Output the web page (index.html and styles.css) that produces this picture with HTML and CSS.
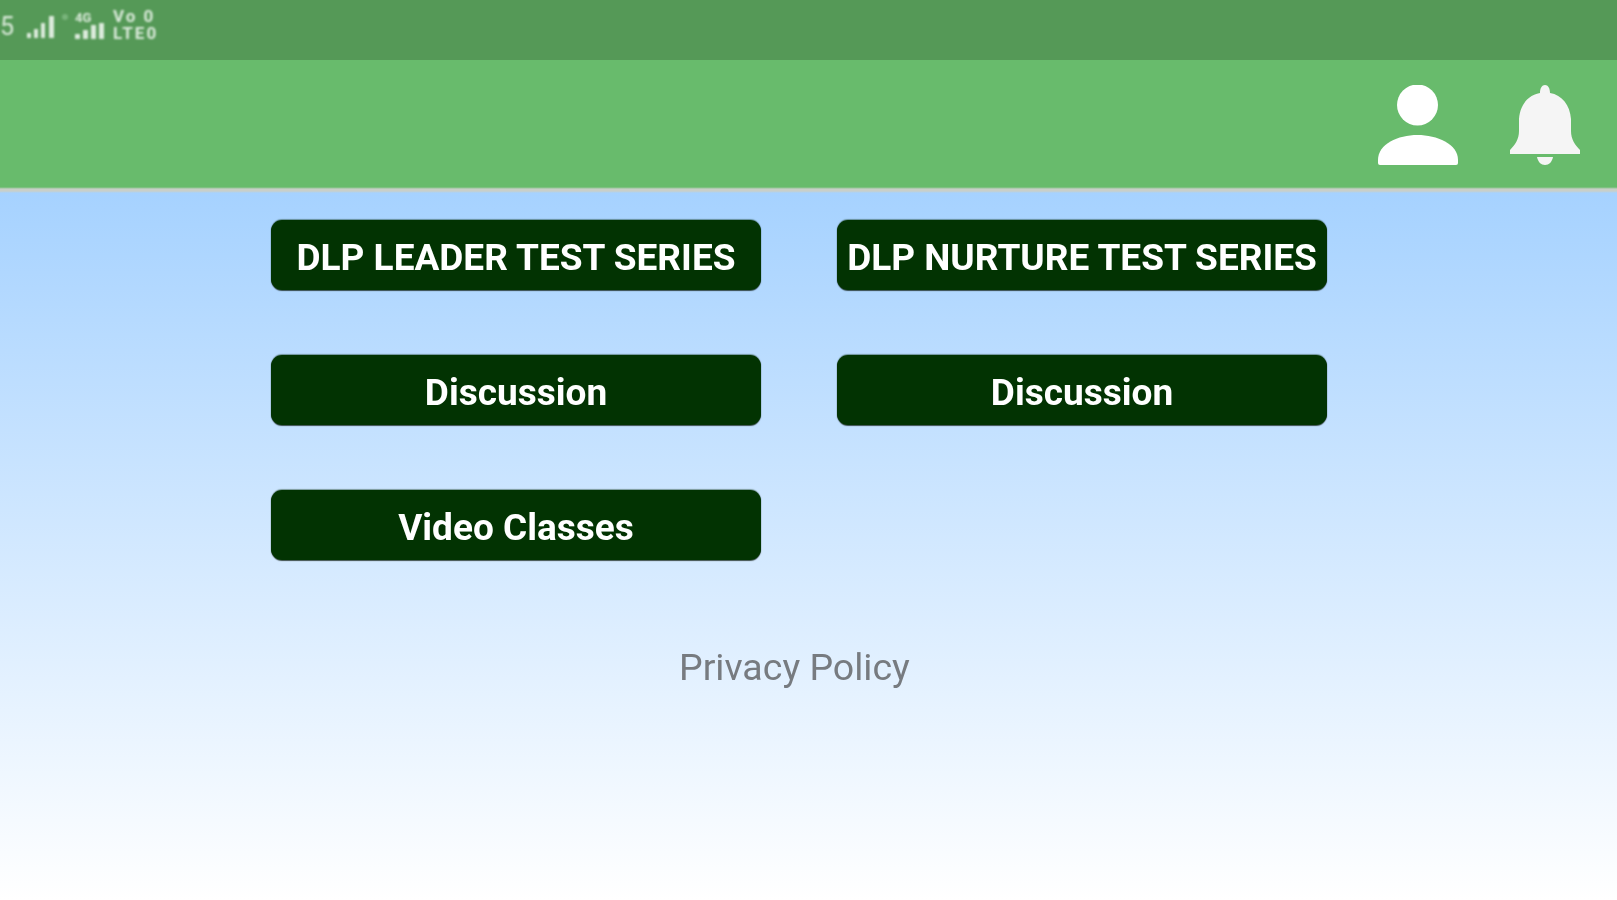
FILE: index.html
```html
<!DOCTYPE html>
<html>
<head>
  <title>DLP Test Series</title>
  <link rel="stylesheet" href="styles.css">
</head>

<body>
  <div class="status-bar">
    <span class="status-bar__time">5</span>
    <svg class="status-bar__signal" width="28" height="24" viewBox="0 0 28 24">
      <rect x="0" y="18" width="4" height="5" />
      <rect x="7" y="14" width="4" height="9" />
      <rect x="14" y="8" width="4" height="15" />
      <rect x="22" y="1" width="5" height="22" />
    </svg>
    <span class="status-bar__dot"></span>
    <div class="status-bar__network">
      <span class="status-bar__label">4G</span>
      <svg width="30" height="16" viewBox="0 0 30 16">
        <rect x="0" y="11" width="5" height="5" />
        <rect x="8" y="7" width="5" height="9" />
        <rect x="16" y="2" width="5" height="14" />
        <rect x="24" y="0" width="5" height="16" />
      </svg>
    </div>
    <div class="status-bar__volte">
      <span>Vo 0</span>
      <span>LTE0</span>
    </div>
  </div>

  <header class="app-header">
    <svg class="app-header__person" width="82" height="80" viewBox="0 0 82 80">
      <circle cx="40.500" cy="20" r="20.500" />
      <path d="M1 75C1 59 21 50 40.500 50C60 50 81 59 81 75V78Q81 80 79 80H3Q1 80 1 78Z" />
    </svg>
    <svg class="app-header__bell" width="70" height="80" viewBox="0 0 70 80">
      <path d="M35 0C38 0 40 3 40 8C52 10 60 20 61 34V46C61 54 65 60 70 65V69H0V65C5 60 9 54 9 46V34C10 20 18 10 30 8C30 3 32 0 35 0Z" />
      <path d="M27 72H43C42 77 39 80 35 80C31 80 28 77 27 72Z" />
    </svg>
  </header>

  <main class="content">
    <div class="menu-grid">
      <a class="menu-button" href="#">DLP LEADER TEST SERIES</a>
      <a class="menu-button" href="#">DLP NURTURE TEST SERIES</a>
      <a class="menu-button" href="#">Discussion</a>
      <a class="menu-button" href="#">Discussion</a>
      <a class="menu-button" href="#">Video Classes</a>
    </div>
    <a class="privacy-link" href="#">Privacy Policy</a>
  </main>
</body>

</html>
```

FILE: styles.css
```css
* {
  box-sizing: border-box;
}

html,
body {
  height: 100%;
}

body {
  margin: 0;
  display: flex;
  flex-direction: column;
  overflow: hidden;
  font-family: Roboto, "Liberation Sans", sans-serif;
  background-color: #ffffff;
}

a {
  text-decoration: none;
}

.status-bar {
  height: 60px;
  flex-shrink: 0;
  display: flex;
  align-items: flex-start;
  background-color: #559957;
  color: #dcebdc;
  overflow: hidden;
}

.status-bar > * {
  filter: blur(0.8px);
}

.status-bar__time {
  width: 27px;
  margin-top: 14px;
  font-size: 25px;
  line-height: 26px;
}

.status-bar__signal {
  margin-top: 15px;
  fill: #dcebdc;
}

.status-bar__dot {
  width: 6px;
  height: 6px;
  margin-top: 14px;
  margin-left: 7px;
  border-radius: 50%;
  background-color: #7ab57c;
}

.status-bar__network {
  width: 30px;
  margin-top: 13px;
  margin-left: 7px;
  display: flex;
  flex-direction: column;
}

.status-bar__network svg {
  fill: #dcebdc;
}

.status-bar__label {
  height: 10px;
  font-size: 13px;
  line-height: 10px;
  font-weight: bold;
}

.status-bar__volte {
  margin-top: 9px;
  margin-left: 8px;
  display: flex;
  flex-direction: column;
  gap: 2px;
  font-size: 17px;
  line-height: 15px;
  letter-spacing: 2px;
  font-weight: bold;
  white-space: pre;
}

.app-header {
  height: 133px;
  flex-shrink: 0;
  display: flex;
  justify-content: flex-end;
  gap: 51px;
  padding: 25px 37px 0 0;
  background: linear-gradient(to bottom, #68bb6c 127px, #c9cfc9 129px, #c9cfc9 131px, #a6d2ff 133px);
}

.app-header__person {
  fill: #ffffff;
  filter: blur(0.6px);
}

.app-header__bell {
  fill: #f5f5f5;
  filter: blur(0.6px);
}

.content {
  flex: 1;
  padding: 27px 0 0 271px;
  background: linear-gradient(to bottom, #a6d2ff, #ffffff);
}

.menu-grid {
  display: grid;
  grid-template-columns: 490px 490px;
  grid-auto-rows: 70px;
  column-gap: 76px;
  row-gap: 65px;
  filter: blur(0.5px);
}

.menu-button {
  display: flex;
  align-items: center;
  justify-content: center;
  padding-top: 5px;
  background-color: #023302;
  border-radius: 11px;
  box-shadow: 0 1px 1px rgba(0, 15, 0, 0.7), 0 -1px 1px rgba(0, 40, 0, 0.4);
  color: #ffffff;
  font-size: 37px;
  font-weight: bold;
  white-space: nowrap;
}

.privacy-link {
  display: block;
  width: 240px;
  margin: 85px 0 0 408px;
  color: #777b80;
  font-size: 37.500px;
  line-height: 44px;
  white-space: nowrap;
  filter: blur(0.5px);
}
```
